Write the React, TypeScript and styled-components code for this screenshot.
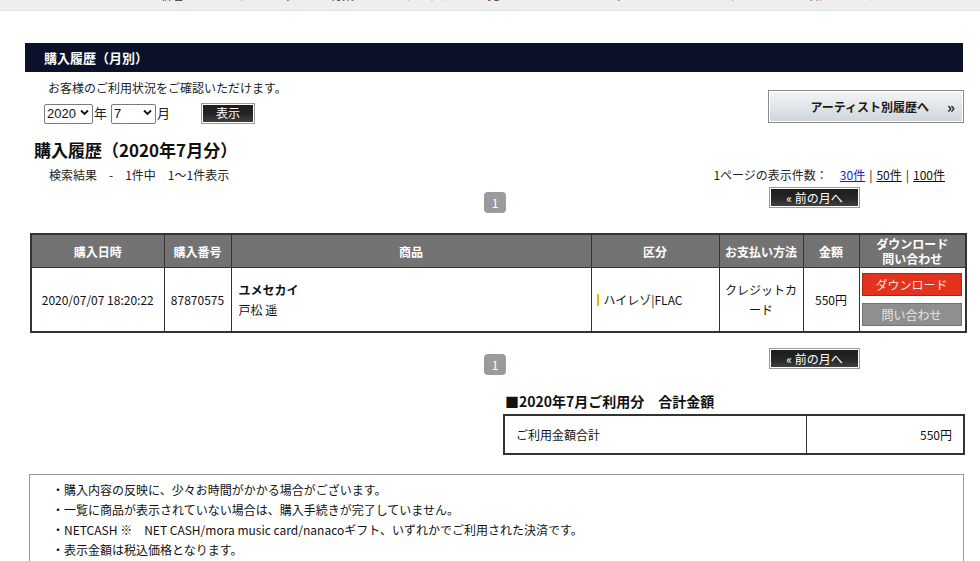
import * as React from "react";
import styled, { createGlobalStyle } from "styled-components";

const GlobalStyle = createGlobalStyle`
  html, body {
    margin: 0;
    padding: 0;
    overflow: hidden;
    background: #fff;
  }
  body {
    font-family: "Noto Sans CJK JP", "Noto Sans", sans-serif;
    font-size: 12px;
    color: #222;
  }
`;

const TopNav = styled.div`
  height: 11px;
  box-sizing: border-box;
  padding-bottom: 8px;
  background: #eeeeee;
  border-bottom: 1px solid #e2e2e2;
  overflow: hidden;
  display: flex;
  align-items: flex-end;
  padding-left: 160px;
`;

const NavItem = styled.span<{ $w: number }>`
  width: ${(p) => p.$w}px;
  flex: none;
  font-size: 12px;
  line-height: 14px;
  color: #333;
  white-space: nowrap;
`;

const Page = styled.div`
  padding: 32px 15px 0 25px;
`;

const TitleBar = styled.div`
  width: 938px;
  height: 29px;
  line-height: 29px;
  padding-left: 19px;
  box-sizing: border-box;
  background: #0b1129;
  color: #fff;
  font-weight: bold;
  font-size: 13px;
`;

const IntroRow = styled.div`
  display: flex;
  justify-content: space-between;
  align-items: flex-start;
`;

const Lead = styled.p`
  margin: 8px 0 0 23px;
  line-height: 16px;
`;

const FormRow = styled.div`
  display: flex;
  align-items: center;
  margin: 7px 0 0 19px;
  height: 20px;
  font-size: 13px;
`;

const SelectWrap = styled.span<{ $w: number }>`
  position: relative;
  display: inline-block;
  width: ${(p) => p.$w}px;
  height: 20px;
`;

const Select = styled.select`
  appearance: none;
  width: 100%;
  height: 20px;
  box-sizing: border-box;
  border: 1px solid #7a7a7a;
  border-radius: 2px;
  padding: 0 0 0 2px;
  font-family: "Liberation Sans", sans-serif;
  font-size: 13px;
  background: #fff;
  color: #111;
`;

const Chevron = styled.svg`
  position: absolute;
  right: 4px;
  top: 6px;
  pointer-events: none;
`;

const Unit = styled.span<{ $mr: number }>`
  margin: 0 ${(p) => p.$mr}px 0 1px;
  line-height: 20px;
`;

const DarkButton = styled.button<{ $w: number; $h: number }>`
  width: ${(p) => p.$w}px;
  height: ${(p) => p.$h}px;
  box-sizing: border-box;
  border: 1px solid #9a9a9a;
  outline: 1px solid #fff;
  outline-offset: -2px;
  background: linear-gradient(#1b1b1b, #262626 55%, #444 100%);
  color: #fff;
  font-family: "Noto Sans CJK JP", sans-serif;
  font-size: 12px;
  line-height: 1;
  padding: 0;
  cursor: pointer;
`;

const ArtistButton = styled.button`
  width: 196px;
  height: 33px;
  margin-top: 18px;
  margin-right: 1px;
  box-sizing: border-box;
  border: 1px solid #8a8a8a;
  box-shadow: inset 0 0 0 1px #fff;
  background: linear-gradient(#f3f5f7, #e3e7eb 45%, #cfd5db 100%);
  display: flex;
  align-items: center;
  justify-content: flex-end;
  padding: 0 8px 0 0;
  font-family: "Noto Sans CJK JP", sans-serif;
  font-weight: bold;
  font-size: 12px;
  color: #1a1a1a;
  cursor: pointer;

  span {
    margin-left: 18px;
    font-size: 15px;
    font-weight: bold;
  }
`;

const Heading = styled.h2`
  margin: 17px 0 0 9px;
  font-size: 17px;
  line-height: 20px;
  font-weight: bold;
  color: #111;
`;

const ResultRow = styled.div`
  display: flex;
  justify-content: space-between;
  margin-top: 8px;
  line-height: 14px;
`;

const ResultText = styled.span`
  margin-left: 24px;
  white-space: pre;
`;

const PerPage = styled.span`
  margin-right: 20px;
  white-space: pre;
`;

const PerLink = styled.a<{ $active?: boolean }>`
  color: ${(p) => (p.$active ? "#1a1acc" : "#111")};
  text-decoration: underline;
  cursor: pointer;
`;

const Sep = styled.span`
  margin: 0 4px;
`;

const PagerRow = styled.div<{ $mt: number; $boxTop: number }>`
  display: grid;
  grid-template-columns: 1fr auto 1fr;
  margin-top: ${(p) => p.$mt}px;
  height: ${(p) => p.$boxTop + 21}px;

  & > :first-child {
    grid-column: 2;
    margin-top: ${(p) => p.$boxTop}px;
  }
  & > :last-child {
    grid-column: 3;
    justify-self: end;
    margin-right: 105px;
    align-self: start;
  }
`;

const PageBox = styled.span`
  display: inline-flex;
  align-items: center;
  justify-content: center;
  width: 22px;
  height: 21px;
  border-radius: 4px;
  background: #9b9b9b;
  color: #fff;
  font-size: 12px;
`;

const HistoryTable = styled.table`
  margin: 20px 0 0 5px;
  width: 935px;
  border-collapse: collapse;
  border: 2px solid #333;
  table-layout: fixed;

  th {
    background: #737373;
    color: #fff;
    font-weight: bold;
    font-size: 12px;
    line-height: 15px;
    height: 32px;
    border: 1px solid #333;
    padding: 0;
  }
  td {
    height: 63px;
    border: 1px solid #333;
    font-size: 12px;
    line-height: 20px;
    padding: 0;
    color: #111;
  }
`;

const Center = styled.td`
  text-align: center;
`;

const ProductCell = styled.td`
  && {
    padding-left: 7px;
  }
  b {
    display: block;
  }
`;

const TypeCell = styled.td`
  && {
    padding-left: 5px;
  }
  &::before {
    content: "";
    display: inline-block;
    width: 2px;
    height: 12px;
    margin-right: 5px;
    vertical-align: -1px;
    background: #f2b705;
  }
`;

const PayCell = styled.td`
  text-align: center;
  line-break: anywhere;
  && {
    padding: 0 5px;
  }
`;

const ActionCell = styled.td`
  && {
    padding: 0 2px;
  }
  div {
    display: flex;
    flex-direction: column;
    gap: 7px;
  }
`;

const ActionButton = styled.button<{ $tone: "red" | "gray" }>`
  width: 100px;
  height: 23px;
  box-sizing: border-box;
  border: 1px solid ${(p) => (p.$tone === "red" ? "#b02414" : "#747474")};
  background: ${(p) => (p.$tone === "red" ? "#e3331f" : "#8f8f8f")};
  color: ${(p) => (p.$tone === "red" ? "#fde3dd" : "#e6e6e6")};
  font-family: "Noto Sans CJK JP", sans-serif;
  font-size: 12px;
  padding: 0;
  cursor: pointer;
`;

const SummaryBlock = styled.div`
  margin: 17px 0 0 478px;
  width: 462px;
`;

const SummaryTitle = styled.h3`
  margin: 0 0 0 2px;
  font-size: 14px;
  line-height: 18px;
  font-weight: bold;
  color: #111;
  white-space: pre;
`;

const SummaryTable = styled.table`
  margin-top: 4px;
  width: 462px;
  border-collapse: collapse;
  border: 2px solid #333;

  td {
    height: 37px;
    border: 1px solid #333;
    font-size: 12px;
    padding: 0 11px;
    color: #111;
  }
  td:last-child {
    width: 134px;
    text-align: right;
  }
`;

const Notes = styled.ul`
  margin: 19px 0 0 4px;
  padding: 5px 0 10px 22px;
  width: 935px;
  box-sizing: border-box;
  border: 1px solid #999;
  list-style: none;

  li {
    line-height: 20px;
    font-size: 12px;
    color: #111;
  }
`;

const navItems: [string, number][] = [
  ["新着", 77],
  ["ランキング", 93],
  ["特集", 75],
  ["アーティスト一覧", 196],
  ["ジャンル", 104],
  ["ヘルプ", 93],
  ["お知らせ", 65],
  ["マイページ", 100],
];

const ChevronIcon = () => (
  <Chevron width="9" height="7" viewBox="0 0 9 7">
    <path d="M1 1.5 L4.5 5 L8 1.5" fill="none" stroke="#111" strokeWidth="1.8" />
  </Chevron>
);

const Pager: React.FC<{ mt: number; boxTop: number }> = ({ mt, boxTop }) => (
  <PagerRow $mt={mt} $boxTop={boxTop}>
    <PageBox>1</PageBox>
    <DarkButton $w={91} $h={21}>« 前の月へ</DarkButton>
  </PagerRow>
);

const App: React.FC = (): React.ReactElement => {
  return (
    <>
      <GlobalStyle />
      <TopNav>
        {navItems.map(([label, w]) => (
          <NavItem key={label} $w={w}>
            {label}
          </NavItem>
        ))}
      </TopNav>
      <Page>
        <TitleBar>購入履歴（月別）</TitleBar>
        <IntroRow>
          <div>
            <Lead>お客様のご利用状況をご確認いただけます。</Lead>
            <FormRow>
              <SelectWrap $w={49}>
                <Select defaultValue="2020">
                  <option>2020</option>
                  <option>2019</option>
                </Select>
                <ChevronIcon />
              </SelectWrap>
              <Unit $mr={4}>年</Unit>
              <SelectWrap $w={45}>
                <Select defaultValue="7">
                  {Array.from({ length: 12 }, (_, i) => (
                    <option key={i}>{i + 1}</option>
                  ))}
                </Select>
                <ChevronIcon />
              </SelectWrap>
              <Unit $mr={31}>月</Unit>
              <DarkButton $w={54} $h={21}>
                表示
              </DarkButton>
            </FormRow>
          </div>
          <ArtistButton>
            アーティスト別履歴へ<span>»</span>
          </ArtistButton>
        </IntroRow>

        <Heading>購入履歴（2020年7月分）</Heading>
        <ResultRow>
          <ResultText>検索結果　-　1件中　1～1件表示</ResultText>
          <PerPage>
            1ページの表示件数：　<PerLink $active>30件</PerLink>
            <Sep>|</Sep>
            <PerLink>50件</PerLink>
            <Sep>|</Sep>
            <PerLink>100件</PerLink>
          </PerPage>
        </ResultRow>

        <Pager mt={5} boxTop={5} />

        <HistoryTable>
          <colgroup>
            <col style={{ width: 133 }} />
            <col style={{ width: 67 }} />
            <col style={{ width: 360 }} />
            <col style={{ width: 128 }} />
            <col style={{ width: 84 }} />
            <col style={{ width: 56 }} />
            <col style={{ width: 107 }} />
          </colgroup>
          <thead>
            <tr>
              <th>購入日時</th>
              <th>購入番号</th>
              <th>商品</th>
              <th>区分</th>
              <th>お支払い方法</th>
              <th>金額</th>
              <th>
                ダウンロード
                <br />
                問い合わせ
              </th>
            </tr>
          </thead>
          <tbody>
            <tr>
              <Center>2020/07/07 18:20:22</Center>
              <Center>87870575</Center>
              <ProductCell>
                <b>ユメセカイ</b>
                戸松 遥
              </ProductCell>
              <TypeCell>ハイレゾ|FLAC</TypeCell>
              <PayCell>クレジットカード</PayCell>
              <Center>550円</Center>
              <ActionCell>
                <div>
                  <ActionButton $tone="red">ダウンロード</ActionButton>
                  <ActionButton $tone="gray">問い合わせ</ActionButton>
                </div>
              </ActionCell>
            </tr>
          </tbody>
        </HistoryTable>

        <Pager mt={15} boxTop={6} />

        <SummaryBlock>
          <SummaryTitle>■2020年7月ご利用分　合計金額</SummaryTitle>
          <SummaryTable>
            <tbody>
              <tr>
                <td>ご利用金額合計</td>
                <td>550円</td>
              </tr>
            </tbody>
          </SummaryTable>
        </SummaryBlock>

        <Notes>
          <li>・購入内容の反映に、少々お時間がかかる場合がございます。</li>
          <li>・一覧に商品が表示されていない場合は、購入手続きが完了していません。</li>
          <li>・NETCASH ※　NET CASH/mora music card/nanacoギフト、いずれかでご利用された決済です。</li>
          <li>・表示金額は税込価格となります。</li>
        </Notes>
      </Page>
    </>
  );
};

export default App;
